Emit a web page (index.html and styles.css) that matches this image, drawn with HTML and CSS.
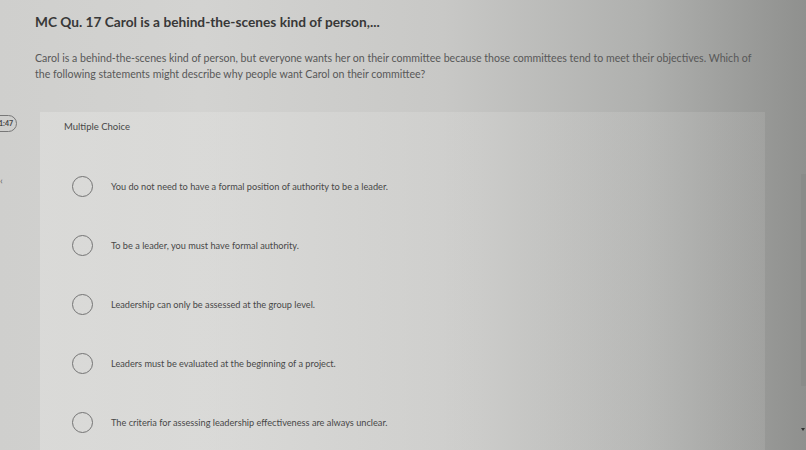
FILE: index.html
```html
<!DOCTYPE html>
<html>
<head>
<meta charset="utf-8">
<link rel="stylesheet" href="styles.css">
</head>
<body>
<div class="page">
  <header class="head">
    <h1 class="title">MC Qu. 17 Carol is a behind-the-scenes kind of person,...</h1>
    <p class="prompt">Carol is a behind-the-scenes kind of person, but everyone wants her on their committee because those committees tend to meet their objectives. Which of the following statements might describe why people want Carol on their committee?</p>
  </header>
  <div class="body">
    <div class="side">
      <div class="timer">1:47</div>
      <div class="back">&lsaquo;</div>
    </div>
    <section class="card">
      <div class="type">Multiple Choice</div>
      <ul class="options">
        <li class="option"><span class="radio"></span><span class="label">You do not need to have a formal position of authority to be a leader.</span></li>
        <li class="option"><span class="radio"></span><span class="label">To be a leader, you must have formal authority.</span></li>
        <li class="option"><span class="radio"></span><span class="label">Leadership can only be assessed at the group level.</span></li>
        <li class="option"><span class="radio"></span><span class="label">Leaders must be evaluated at the beginning of a project.</span></li>
        <li class="option"><span class="radio"></span><span class="label">The criteria for assessing leadership effectiveness are always unclear.</span></li>
      </ul>
    </section>
    <div class="scroll"><div class="thumb"></div><div class="arrow"></div></div>
  </div>
</div>
</body>
</html>
```
FILE: styles.css
```css
html, body {
  margin: 0;
  padding: 0;
  height: 100%;
  overflow: hidden;
}
body {
  background: linear-gradient(90deg, #cfcfcd 0%, #d3d3d1 25%, #c8c8c6 55%, #afb0ae 80%, #8f908e 100%);
  font-family: Lato, "Open Sans", sans-serif;
  color: #3a3a3a;
}
.page {
  height: 450px;
  overflow: hidden;
  display: flex;
  flex-direction: column;
}
.head {
  padding: 12px 0 0 35px;
}
.title {
  margin: 0;
  font-size: 13.7px;
  font-weight: 700;
  color: #383838;
  line-height: 20px;
}
.prompt {
  margin: 18px 0 0 0;
  width: 730px;
  font-size: 10.6px;
  line-height: 16px;
  color: #585858;
}
.body {
  flex: 1;
  min-height: 0;
  display: flex;
  margin-top: 30px;
}
.side {
  width: 40px;
  position: relative;
}
.timer {
  position: absolute;
  left: -14px;
  top: 3px;
  width: 31px;
  height: 17px;
  border: 1px solid #777;
  border-radius: 9px;
  font-size: 7px;
  font-weight: 700;
  line-height: 15px;
  text-align: right;
  padding-right: 3px;
  box-sizing: border-box;
  color: #444;
}
.back {
  position: absolute;
  left: 0;
  top: 62px;
  font-size: 10px;
  color: #666;
}
.card {
  width: 725px;
  background: linear-gradient(90deg, rgba(232,232,230,0.4), rgba(224,224,222,0.28) 60%, rgba(200,200,198,0.2));
}
.type {
  padding: 8px 0 0 24px;
  font-size: 9.5px;
  line-height: 14px;
  color: #474747;
}
.options {
  list-style: none;
  margin: 23px 0 0 0;
  padding: 0;
}
.option {
  display: flex;
  align-items: center;
  height: 59px;
  padding-left: 32px;
}
.radio {
  width: 21px;
  height: 21px;
  border: 1.2px solid #747474;
  border-radius: 50%;
  box-sizing: border-box;
  flex: none;
}
.label {
  margin-left: 18px;
  font-size: 9.2px;
  color: #484848;
}
.scroll {
  margin-left: auto;
  width: 6px;
  position: relative;
}
.thumb {
  position: absolute;
  left: 1px;
  top: 62px;
  width: 5px;
  height: 212px;
  background: #8a8b89;
}
.arrow {
  position: absolute;
  left: 1px;
  top: 316px;
  width: 0;
  height: 0;
  border-left: 2px solid transparent;
  border-right: 2px solid transparent;
  border-top: 3px solid #333;
}
```
